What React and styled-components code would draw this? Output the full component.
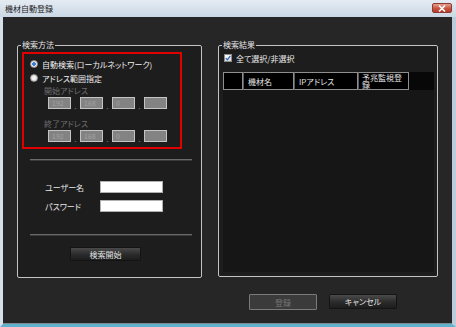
import React from 'react';
import styled, { createGlobalStyle } from 'styled-components';

const GlobalStyle = createGlobalStyle`
  html, body {
    margin: 0;
    padding: 0;
    background: #262626;
  }
  body {
    font-family: "Noto Sans CJK JP", "DejaVu Sans", sans-serif;
    font-size: 8px;
    font-feature-settings: "palt";
  }
`;

const Window = styled.div`
  width: 456px;
  height: 327px;
  box-sizing: border-box;
  display: flex;
  flex-direction: column;
  background: #cfdae6;
  border-left: 3px solid #d6e0ea;
  border-right: 4px solid #b9ccd9;
  border-bottom: 3px solid #5fb2cc;
`;

const TitleBar = styled.div`
  height: 17px;
  margin-left: -3px;
  margin-right: -4px;
  padding: 0 4px 0 5px;
  display: flex;
  align-items: center;
  justify-content: space-between;
  background: linear-gradient(#e4ebf3, #cbd7e4);
  color: #1b1b1b;
  font-size: 8px;
`;

const CloseButton = styled.div`
  width: 20px;
  height: 10px;
  margin-top: -1px;
  border: 1px solid #8a3a2e;
  border-radius: 2px;
  box-sizing: border-box;
  background: linear-gradient(#e6a08f, #c9533f 55%, #b63b28);
  display: flex;
  align-items: center;
  justify-content: center;
`;

const Body = styled.div`
  flex: 1;
  background: #262626;
  border-bottom: 1px solid #7c8a94;
  padding: 23px 15px 0 14px;
  display: flex;
  flex-direction: column;
`;

const Columns = styled.div`
  display: grid;
  grid-template-columns: 185px 220px;
  gap: 16px;
`;

const Group = styled.fieldset`
  margin: 0;
  padding: 0;
  min-width: 0;
  height: ${p => p.$h}px;
  box-sizing: border-box;
  border: 1px solid #c4c4c4;
  border-radius: 2px;
  background: #1d1d1d;
  display: flex;
  flex-direction: column;
`;

const Legend = styled.legend`
  margin-left: 3px;
  padding: 0 1px;
  height: 10px;
  line-height: 10px;
  color: #e6e6e6;
  font-size: 8px;
`;

const RedFrame = styled.div`
  margin: 2px 0 0 4px;
  width: 160px;
  height: 97px;
  box-sizing: border-box;
  border: 2px solid #e00000;
  padding: 3px 0 0 6px;
  display: flex;
  flex-direction: column;
`;

const RadioRow = styled.div`
  display: flex;
  align-items: center;
  gap: 4px;
  height: 14px;
  color: #f0f0f0;
`;

const Radio = styled.span`
  width: 8px;
  height: 8px;
  border-radius: 50%;
  box-sizing: border-box;
  border: 1px solid #9a9a9a;
  background: ${p => (p.$on ? 'radial-gradient(circle, #3d7fd6 0 1.6px, #eaeaea 2px)' : 'radial-gradient(circle, #ffffff, #d4d4d4)')};
`;

const SubLabel = styled.div`
  margin: ${p => p.$mt}px 0 0 14px;
  height: 10px;
  line-height: 10px;
  color: #6e6e6e;
`;

const IpRow = styled.div`
  display: flex;
  align-items: flex-end;
  margin: 1px 0 0 18px;
`;

const IpBox = styled.div`
  width: 23px;
  height: 12px;
  box-sizing: border-box;
  border: 1px solid #c4c4c4;
  background: #838383;
  color: #a2a2a2;
  font-size: 7px;
  line-height: 10px;
  padding-left: 3px;
`;

const IpDot = styled.span`
  width: 9px;
  text-align: center;
  color: #9a9a9a;
  line-height: 6px;
  font-size: 7px;
`;

const Separator = styled.div`
  margin: ${p => p.$mt}px 9px 0 12px;
  height: 1px;
  background: #6a6a6a;
  border-bottom: 1px solid #3a3a3a;
`;

const FieldRow = styled.div`
  display: flex;
  align-items: center;
  margin: ${p => p.$mt}px 0 0 27px;
  height: 12px;
`;

const FieldLabel = styled.span`
  width: 55px;
  color: #e8e8e8;
`;

const TextInput = styled.div`
  width: 63px;
  height: 12px;
  box-sizing: border-box;
  border: 1px solid #b0b0b0;
  background: #ffffff;
`;

const Button = styled.div`
  width: ${p => p.$w}px;
  height: ${p => p.$h}px;
  box-sizing: border-box;
  display: flex;
  align-items: center;
  justify-content: center;
  color: ${p => (p.$disabled ? '#767676' : '#e2e2e2')};
  border: 1px solid ${p => (p.$disabled ? '#7a7a7a' : '#141414')};
  background: ${p => (p.$disabled ? '#3b3b3b' : 'linear-gradient(#4a4a4a, #2a2a2a 55%, #1d1d1d)')};
  border-radius: 1px;
`;

const CenterButton = styled.div`
  margin: 11px 0 0 52px;
`;

const CheckRow = styled.div`
  display: flex;
  align-items: center;
  gap: 4px;
  margin: 2px 0 0 5px;
  height: 12px;
  color: #ececec;
`;

const CheckBox = styled.span`
  width: 8px;
  height: 8px;
  box-sizing: border-box;
  border: 1px solid #8d8d8d;
  background: linear-gradient(#ffffff, #d8d8d8);
  display: flex;
  align-items: center;
  justify-content: center;
`;

const ListView = styled.div`
  margin: 8px 0 0 4px;
  width: 211px;
  height: 200px;
  background: #161616;
`;

const HeaderRow = styled.div`
  display: flex;
  height: 18px;
  background: #080808;
`;

const HeaderCell = styled.div`
  width: ${p => p.$w}px;
  box-sizing: border-box;
  border: 1px solid #8f8f8f;
  border-left-color: ${p => (p.$first ? '#8f8f8f' : '#5a5a5a')};
  background: #000;
  color: #e4e4e4;
  font-size: 8px;
  line-height: 7px;
  padding: ${p => (p.$two ? '1px 2px 0 3px' : '5px 2px 0 4px')};
  overflow: hidden;
`;

const Footer = styled.div`
  display: flex;
  justify-content: flex-end;
  gap: 12px;
  padding: 16px 40px 0 0;
`;

const ipRows = [
  { label: '開始アドレス', mt: 1 },
  { label: '終了アドレス', mt: 10 },
];

const values = ['192', '168', '0', ''];

const IpFields = () => (
  <IpRow>
    {values.map((v, i) => (
      <React.Fragment key={i}>
        {i > 0 && <IpDot>.</IpDot>}
        <IpBox>{v}</IpBox>
      </React.Fragment>
    ))}
  </IpRow>
);

const App = () => {
  return (
    <>
      <GlobalStyle />
      <Window>
        <TitleBar>
          <span>機材自動登録</span>
          <CloseButton>
            <svg width="8" height="7" viewBox="0 0 8 7">
              <path d="M1 0.5 L7 6.5 M7 0.5 L1 6.5" stroke="#fff" strokeWidth="1.6" />
            </svg>
          </CloseButton>
        </TitleBar>
        <Body>
          <Columns>
            <Group $h={238}>
              <Legend>検索方法</Legend>
              <RedFrame>
                <RadioRow>
                  <Radio $on />
                  <span>自動検索(ローカルネットワーク)</span>
                </RadioRow>
                <RadioRow>
                  <Radio />
                  <span>アドレス範囲指定</span>
                </RadioRow>
                {ipRows.map(r => (
                  <React.Fragment key={r.label}>
                    <SubLabel $mt={r.mt}>{r.label}</SubLabel>
                    <IpFields />
                  </React.Fragment>
                ))}
              </RedFrame>
              <Separator $mt={10} />
              <FieldRow $mt={20}>
                <FieldLabel>ユーザー名</FieldLabel>
                <TextInput />
              </FieldRow>
              <FieldRow $mt={7}>
                <FieldLabel>パスワード</FieldLabel>
                <TextInput />
              </FieldRow>
              <Separator $mt={22} />
              <CenterButton>
                <Button $w={71} $h={14}>検索開始</Button>
              </CenterButton>
            </Group>
            <Group $h={237}>
              <Legend>検索結果</Legend>
              <CheckRow>
                <CheckBox>
                  <svg width="6" height="6" viewBox="0 0 6 6">
                    <path d="M0.8 3.2 L2.4 4.8 L5.4 0.8" stroke="#2f5fb8" strokeWidth="1.2" fill="none" />
                  </svg>
                </CheckBox>
                <span>全て選択/非選択</span>
              </CheckRow>
              <ListView>
                <HeaderRow>
                  <HeaderCell $w={20} $first />
                  <HeaderCell $w={51}>機材名</HeaderCell>
                  <HeaderCell $w={64}>IPアドレス</HeaderCell>
                  <HeaderCell $w={51} $two>予兆監視登録</HeaderCell>
                </HeaderRow>
              </ListView>
            </Group>
          </Columns>
          <Footer>
            <Button $w={68} $h={16} $disabled>登録</Button>
            <Button $w={68} $h={15}>キャンセル</Button>
          </Footer>
        </Body>
      </Window>
    </>
  );
};

export default App;
